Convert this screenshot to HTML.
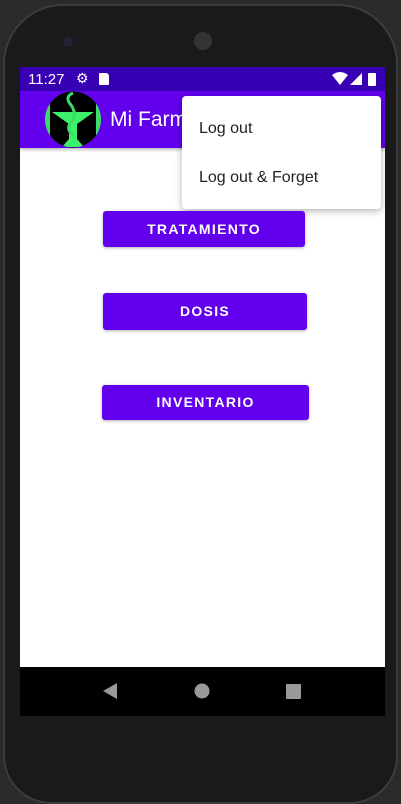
<!DOCTYPE html><html><head><style>
body{margin:0;width:401px;height:793px;background:#2a2a2a;position:relative;overflow:hidden;font-family:"Liberation Sans",sans-serif}
.ph{position:absolute;left:3px;top:4px;width:395px;height:800px;border-radius:60px 60px 48px 48px;background:#1a1a1a;border:2px solid #3c3c3c;box-sizing:border-box}
.scr{position:absolute;left:20px;top:67px;width:365px;height:600px;background:#fff}
.sb{position:absolute;left:20px;top:67px;width:365px;height:24px;background:#3700b3;color:#fff;font-size:15px}
.ab{position:absolute;left:20px;top:91px;width:365px;height:57px;background:#6200ee;box-shadow:0 2px 3px rgba(0,0,0,.25)}
.btn{position:absolute;background:#6200ee;color:#fff;font-size:14px;letter-spacing:1.3px;text-align:center;border-radius:3px;box-shadow:0 1px 3px rgba(0,0,0,.3);font-weight:bold}
.menu{position:absolute;left:182px;top:96px;width:199px;height:113px;background:#fff;border-radius:4px;box-shadow:0 2px 8px rgba(0,0,0,.3);font-size:16px;color:#222}
.nav{position:absolute;left:20px;top:667px;width:365px;height:49px;background:#000}
</style></head><body>
<div class="ph"></div>
<div style="position:absolute;left:63px;top:37px;width:10px;height:10px;border-radius:50%;background:#223"></div>
<div style="position:absolute;left:194px;top:32px;width:18px;height:18px;border-radius:50%;background:#333"></div>
<div class="scr"></div>
<div class="sb"><span style="position:absolute;left:8px;top:4px">11:27</span>
<span style="position:absolute;left:56px;top:3px;font-size:14px">⚙</span>
<div style="position:absolute;left:79px;top:6px;width:10px;height:12px;background:#fff;border-radius:1px 3px 1px 1px"></div>
<svg style="position:absolute;left:312px;top:5px" width="50" height="14"><path d="M0 3Q8-3 16 3L8 13Z" fill="#fff"/><path d="M30 1V13H18Z" fill="#fff"/><rect x="36" y="1" width="8" height="13" rx="1" fill="#fff"/></svg></div>
<div class="ab">
<svg style="position:absolute;left:24px;top:0" width="58" height="57"><defs><clipPath id="c"><circle cx="29" cy="28.5" r="28"/></clipPath></defs><g clip-path="url(#c)"><rect width="58" height="57" fill="#3ddc6a"/><rect x="6" y="0" width="46" height="57" fill="#000"/><path d="M8 21H50L33 33V48L40 56H18L25 48V33Z" fill="#3df06a"/><path d="M29 2Q20 6 27 14Q34 24 26 32Q22 40 30 44" stroke="#3ddc6a" stroke-width="3" fill="none"/></g></svg>
<span style="position:absolute;left:90px;top:17px;color:#fff;font-size:21px">Mi Farm</span></div>
<div class="menu"><span style="position:absolute;left:17px;top:24px">Log out</span><span style="position:absolute;left:17px;top:73px">Log out &amp; Forget</span></div>
<div class="btn" style="left:103px;top:211px;width:202px;height:36px;line-height:36px">TRATAMIENTO</div>
<div class="btn" style="left:103px;top:293px;width:204px;height:37px;line-height:37px">DOSIS</div>
<div class="btn" style="left:102px;top:385px;width:207px;height:35px;line-height:35px">INVENTARIO</div>
<div class="nav"><svg width="365" height="49"><path d="M83 24L97 16V32Z" fill="#999"/><circle cx="182" cy="24" r="7.5" fill="#999"/><rect x="266" y="17" width="15" height="15" rx="1" fill="#999"/></svg></div>
</body></html>
